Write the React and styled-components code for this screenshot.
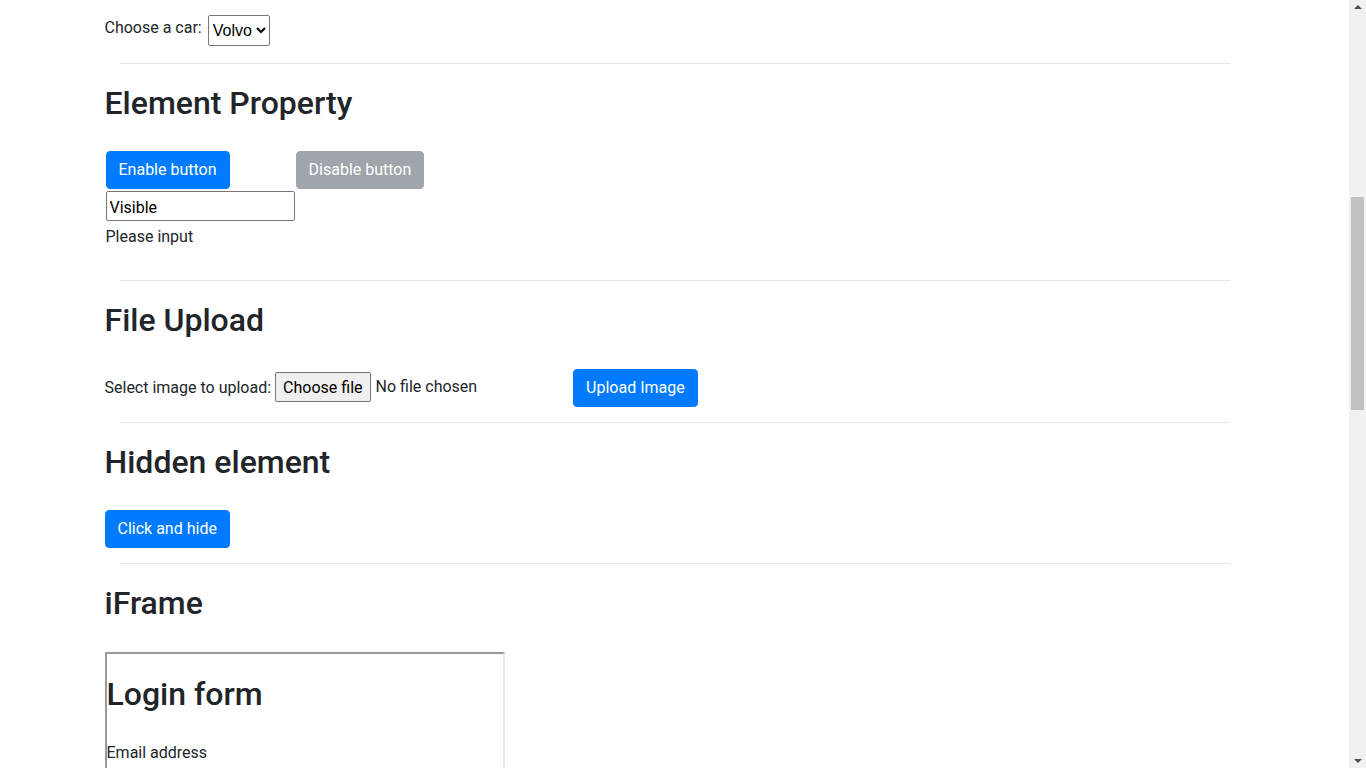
import React from "react";
import styled, { createGlobalStyle } from "styled-components";

const GlobalStyle = createGlobalStyle`
  body {
    margin: 0;
    padding-right: 17px;
    font-family: Roboto, "Noto Sans", "Liberation Sans", sans-serif;
    font-size: 16px;
    line-height: 1.5;
    color: #212529;
    background: #fff;
  }
`;

/* classic scrollbar, drawn over the right edge like in the screenshot */
const ScrollTrack = styled.div`
  position: fixed;
  top: 0;
  right: 0;
  width: 17px;
  height: 100vh;
  display: flex;
  flex-direction: column;
  justify-content: space-between;
  align-items: center;
  padding: 5px 0;
  box-sizing: border-box;
  background: #f1f1f1;
`;

const Arrow = styled.span`
  width: 0;
  height: 0;
  border-left: 4px solid transparent;
  border-right: 4px solid transparent;
  ${({ $down }) =>
    $down ? "border-top: 4px solid #505050;" : "border-bottom: 4px solid #505050;"}
`;

const Thumb = styled.span`
  position: absolute;
  top: 197px;
  left: 2px;
  width: 13px;
  height: 213px;
  background: #c1c1c1;
`;

const Container = styled.div`
  width: 1140px;
  margin: 0 auto;
  padding-bottom: 200px;
`;

const CarRow = styled.div`
  display: flex;
  align-items: flex-start;
  gap: 6px;
  padding-top: 15px;
`;

const Label = styled.label`
  margin-top: 1px;
`;

const Select = styled.select`
  height: 31px;
  padding: 0;
  font-family: "Liberation Sans", Arial, sans-serif;
  font-size: 16px;
  color: #000;
  background: #fff;
  border: 1px solid #767676;
  border-radius: 2px;
`;

const Divider = styled.hr`
  margin: ${({ $top }) => $top}px 15px 16px;
  border: 0;
  border-top: 1px solid rgba(0, 0, 0, 0.1);
`;

const Heading = styled.h2`
  margin: 0 0 29px;
  padding-top: 4px;
  font-size: 32px;
  font-weight: 500;
  line-height: 1.2;
`;

const Block = styled.div`
  padding-left: ${({ $shift }) => $shift || 0}px;
`;

const ButtonRow = styled.div`
  display: flex;
  gap: 66px;
`;

const Button = styled.button`
  height: 38px;
  padding: 6px 12px;
  font-family: inherit;
  font-size: 16px;
  line-height: 24px;
  color: #fff;
  background: ${({ $disabled }) => ($disabled ? "#9fa5aa" : "#007bff")};
  border: 1px solid ${({ $disabled }) => ($disabled ? "#9fa5aa" : "#007bff")};
  border-radius: 4px;
  cursor: ${({ $disabled }) => ($disabled ? "default" : "pointer")};
`;

const TextField = styled.input`
  display: block;
  box-sizing: border-box;
  width: 189px;
  height: 30px;
  margin-top: 2px;
  padding: 2px 3px 0;
  font-family: inherit;
  font-size: 16px;
  color: #000;
  border: 1px solid #767676;
  border-radius: 2px;
`;

const Hint = styled.div`
  margin-top: 4px;
`;

const UploadRow = styled.div`
  display: flex;
  align-items: center;
  gap: 4px;
`;

const UploadLabel = styled.span`
  padding-top: 1px;
`;

const FilePicker = styled.label`
  display: flex;
  align-items: center;
  width: 294px;
  margin-top: -2px;
  cursor: pointer;

  input {
    display: none;
  }
`;

const FileButton = styled.span`
  box-sizing: border-box;
  height: 30px;
  margin-right: 5px;
  padding: 2px 7px 0;
  line-height: 26px;
  color: #000;
  background: #efefef;
  border: 1px solid #767676;
  border-radius: 2px;
`;

const FileName = styled.span`
  padding-top: 1px;
`;

const FrameBox = styled.div`
  box-sizing: border-box;
  width: 400px;
  height: 420px;
  border: 2px solid;
  border-color: #9a9a9a #e8e8e8 #e8e8e8 #9a9a9a;
  overflow: hidden;
`;

const FrameHeading = styled(Heading)`
  margin: 17px 0 27px;
`;

const FrameLabel = styled.div`
  margin-bottom: 8px;
  padding-top: 1px;
`;

const FrameInput = styled.input`
  display: block;
  box-sizing: border-box;
  width: 100%;
  height: 38px;
  margin-bottom: 16px;
  padding: 6px 12px;
  font-family: inherit;
  font-size: 16px;
  border: 1px solid #ced4da;
  border-radius: 4px;
`;

export default function App() {
  return (
    <>
      <GlobalStyle />
      <Container>
        <CarRow>
          <Label htmlFor="cars">Choose a car:</Label>
          <Select id="cars" defaultValue="volvo">
            <option value="volvo">Volvo</option>
            <option value="saab">Saab</option>
            <option value="opel">Opel</option>
            <option value="audi">Audi</option>
          </Select>
        </CarRow>

        <Divider $top={17} />
        <Heading>Element Property</Heading>
        <Block $shift={1}>
          <ButtonRow>
            <Button>Enable button</Button>
            <Button $disabled disabled>
              Disable button
            </Button>
          </ButtonRow>
          <TextField defaultValue="Visible" />
          <Hint>Please input</Hint>
        </Block>

        <Divider $top={31} />
        <Heading>File Upload</Heading>
        <UploadRow>
          <UploadLabel>Select image to upload:</UploadLabel>
          <FilePicker>
            <input type="file" />
            <FileButton>Choose file</FileButton>
            <FileName>No file chosen</FileName>
          </FilePicker>
          <Button>Upload Image</Button>
        </UploadRow>

        <Divider $top={15} />
        <Heading>Hidden element</Heading>
        <Button>Click and hide</Button>

        <Divider $top={15} />
        <Heading>iFrame</Heading>
        <FrameBox>
          <FrameHeading>Login form</FrameHeading>
          <FrameLabel>Email address</FrameLabel>
          <FrameInput type="email" />
          <FrameLabel>Password</FrameLabel>
          <FrameInput type="password" />
          <Button>Submit</Button>
        </FrameBox>
      </Container>
      <ScrollTrack aria-hidden="true">
        <Arrow />
        <Thumb />
        <Arrow $down />
      </ScrollTrack>
    </>
  );
}
